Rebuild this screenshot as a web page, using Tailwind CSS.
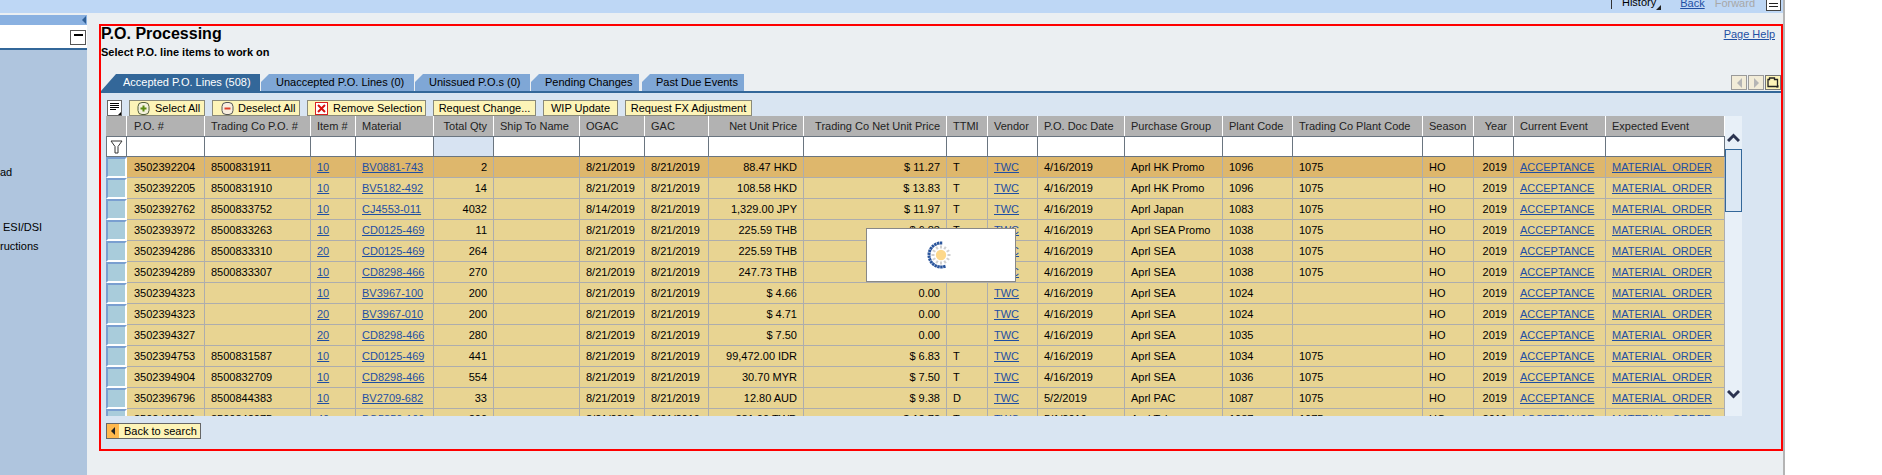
<!DOCTYPE html>
<html lang="en">
<head>
<meta charset="UTF-8">
<title>P.O. Processing</title>
<script src="https://cdn.jsdelivr.net/npm/@tailwindcss/browser@4"></script>
</head>
<body class="bg-white font-['Liberation_Sans',sans-serif] text-[11px] text-black overflow-hidden">
<div class="relative w-[1785px] h-[475px] overflow-hidden bg-[#ebeff2] border-r-2 border-[#b4b4b4] flex flex-col">

  <!-- top bar -->
  <div class="h-[13px] shrink-0 bg-[#bed7f5] flex justify-end items-start overflow-hidden pr-[2px] leading-[13px]">
    <div class="w-px h-[9px] bg-[#333] mr-[10px]"></div>
    <span class="-mt-[4px]">History</span>
    <div class="w-0 h-0 mt-[5px] mr-[19px] border-l-[5px] border-l-transparent border-b-[5px] border-b-[#222]"></div>
    <a class="-mt-[3px] mr-[10px] underline text-[#1f4fa3]">Back</a>
    <span class="-mt-[3px] mr-[11px] text-[#a8a8a8]">Forward</span>
    <div class="relative w-[15px] h-[12px] -mt-px border border-[#444] bg-white flex flex-col gap-[2px] pt-[3px] px-[2px]">
      <div class="h-px bg-[#222]"></div><div class="h-px bg-[#222]"></div>
    </div>
  </div>

  <div class="flex flex-1 min-h-0">
    <!-- left nav -->
    <aside class="w-[87px] shrink-0 pt-[2px] flex flex-col">
      <div class="h-[10px] bg-[#8ab1e1] flex justify-end items-center pr-[1px]">
        <div class="w-0 h-0 border-y-[4px] border-y-transparent border-r-[4px] border-r-[#2f5f95]"></div>
      </div>
      <div class="h-[23px] bg-white flex justify-end items-start pt-[5px] pr-[1px]">
        <div class="w-[16px] h-[15px] border border-[#555] flex justify-center pt-[3px]"><div class="w-[9px] h-[2px] bg-black"></div></div>
      </div>
      <div class="h-[2px] bg-[#336799]"></div>
      <div class="flex-1 bg-[#afc5de] leading-[13px]">
        <div class="mt-[116px]">ad</div>
        <div class="mt-[42px] pl-[3px]">ESI/DSI</div>
        <div class="mt-[6px]">ructions</div>
      </div>
    </aside>

    <!-- main -->
    <main class="flex-1 min-w-0 pt-[11px] pl-[12px]">
      <div class="w-[1684px] h-[427px] border-2 border-[#ff0000] flex flex-col">
        <div class="h-[48px] shrink-0 flex justify-between">
          <div>
            <h1 class="text-[16px] font-bold leading-[18px] mt-[-1px]">P.O. Processing</h1>
            <p class="font-bold leading-[13px] mt-[3px]">Select P.O. line items to work on</p>
          </div>
          <a class="underline text-[#1f4fa3] mr-[6px] mt-[2px] leading-[13px]">Page Help</a>
        </div>

        <!-- tabs -->
        <div class="h-[19px] shrink-0 flex border-b-2 border-[#336799]">
          <div class="w-[159px] h-[17px] bg-[#336799] text-white pl-[22px] leading-[16px] [clip-path:polygon(15px_0,100%_0,100%_100%,0_100%)]">Accepted P.O. Lines (508)</div>
          <div class="w-[153px] h-[17px] ml-px bg-[#7fa7d6] pl-[15px] leading-[16px] [clip-path:polygon(8px_0,100%_0,100%_100%,0_100%,0_8px)]">Unaccepted P.O. Lines (0)</div>
          <div class="w-[115px] h-[17px] ml-[1px] bg-[#7fa7d6] pl-[14px] leading-[16px] [clip-path:polygon(8px_0,100%_0,100%_100%,0_100%,0_8px)]">Unissued P.O.s (0)</div>
          <div class="w-[108px] h-[17px] ml-[1px] bg-[#7fa7d6] pl-[14px] leading-[16px] [clip-path:polygon(8px_0,100%_0,100%_100%,0_100%,0_8px)]">Pending Changes</div>
          <div class="w-[102px] h-[17px] ml-[3px] bg-[#7fa7d6] pl-[14px] leading-[16px] [clip-path:polygon(8px_0,100%_0,100%_100%,0_100%,0_8px)]">Past Due Events</div>
          <div class="ml-auto flex gap-px pt-px">
            <div class="w-[16px] h-[15px] bg-[#f2ecd8] border border-[#9a9a9a] flex items-center justify-center"><div class="w-0 h-0 border-y-[5px] border-y-transparent border-r-[5px] border-r-[#b5b5b5]"></div></div>
            <div class="w-[16px] h-[15px] bg-[#f2ecd8] border border-[#9a9a9a] flex items-center justify-center"><div class="w-0 h-0 border-y-[5px] border-y-transparent border-l-[5px] border-l-[#b5b5b5]"></div></div>
            <div class="w-[16px] h-[15px] bg-[#fdf4b8] border border-[#777] flex items-center justify-center">
              <svg width="12" height="11" viewBox="0 0 12 11" fill="none" stroke="#222"><path d="M1 2.5h1.5V1h5v1.500h3v7h-9.500z" stroke-width="1.300"/><path d="M9 10.500l2.500-2.500v2.500z" fill="#222" stroke="none"/></svg>
            </div>
          </div>
        </div>

        <!-- content -->
        <div class="flex-1 min-h-0 bg-[#d9e5f2] pl-[5px] pt-[7px]">
          <!-- toolbar -->
          <div class="h-[16px] flex gap-[7px] pl-px">
            <div class="relative w-[15px] h-[16px] bg-white border border-[#666] flex flex-col gap-px pt-[2px] px-[2px]">
              <div class="h-px w-[9px] bg-black"></div><div class="h-px w-[9px] bg-black"></div><div class="h-px w-[9px] bg-black"></div><div class="h-px w-[6px] bg-black"></div>
              <div class="absolute right-0 bottom-0 w-0 h-0 border-l-[3px] border-l-transparent border-b-[3px] border-b-black"></div>
            </div>
            <button class="w-[76px] h-[16px] bg-[#fdf4b8] border border-[#8a8a7a] flex items-center pl-[7px] leading-[14px]">
              <svg class="mr-[5px]" width="13" height="13" viewBox="0 0 13 13"><rect x="1" y="0.500" width="11" height="12" rx="4" fill="#f4f1dc" stroke="#55603a"/><path d="M6.500 3.500v6M3.500 6.500h6" stroke="#5c8a12" stroke-width="2"/></svg>Select All</button>
            <button class="w-[88px] h-[16px] bg-[#fdf4b8] border border-[#8a8a7a] flex items-center pl-[8px] leading-[14px]">
              <svg class="mr-[4px]" width="13" height="13" viewBox="0 0 13 13"><rect x="1" y="0.500" width="11" height="12" rx="4" fill="#f8eee0" stroke="#555"/><path d="M3.500 6.500h6" stroke="#e0402a" stroke-width="2"/></svg>Deselect All</button>
            <button class="w-[119px] h-[16px] bg-[#fdf4b8] border border-[#8a8a7a] flex items-center pl-[7px] leading-[14px]">
              <svg class="mr-[5px]" width="13" height="13" viewBox="0 0 13 13"><rect x="0.500" y="0.500" width="12" height="12" fill="#fff" stroke="#d82020"/><path d="M3 3l7 7M10 3l-7 7" stroke="#d81010" stroke-width="2"/></svg>Remove Selection</button>
            <button class="w-[103px] h-[16px] bg-[#fdf4b8] border border-[#8a8a7a] leading-[14px]">Request Change...</button>
            <button class="w-[75px] h-[16px] bg-[#fdf4b8] border border-[#8a8a7a] leading-[14px]">WIP Update</button>
            <button class="w-[127px] h-[16px] bg-[#fdf4b8] border border-[#8a8a7a] leading-[14px]">Request FX Adjustment</button>
          </div>

          <div class="flex h-[300px] items-stretch">
            <div class="w-[1619px] h-[300px] overflow-hidden">
              <table class="w-[1619px] table-fixed border-separate border-spacing-0">
                <colgroup>
                  <col class="w-[21px]"><col class="w-[78px]"><col class="w-[106px]"><col class="w-[45px]"><col class="w-[78px]"><col class="w-[60px]"><col class="w-[86px]"><col class="w-[65px]"><col class="w-[64px]"><col class="w-[95px]"><col class="w-[143px]"><col class="w-[41px]"><col class="w-[50px]"><col class="w-[87px]"><col class="w-[98px]"><col class="w-[70px]"><col class="w-[130px]"><col class="w-[51px]"><col class="w-[40px]"><col class="w-[92px]"><col class="w-[119px]">
                </colgroup>
                <thead>
                  <tr class="h-[20px] bg-[#b2b2b2] text-[#222] font-normal">
                    <th class="border-r border-white"></th>
                    <th class="font-normal text-left pl-[7px] pr-[5px] border-r border-white">P.O. #</th>
                    <th class="font-normal text-left px-[6px] border-r border-white">Trading Co P.O. #</th>
                    <th class="font-normal text-left px-[6px] border-r border-white">Item #</th>
                    <th class="font-normal text-left px-[6px] border-r border-white">Material</th>
                    <th class="font-normal text-right px-[6px] border-r border-white">Total Qty</th>
                    <th class="font-normal text-left px-[6px] border-r border-white">Ship To Name</th>
                    <th class="font-normal text-left px-[6px] border-r border-white">OGAC</th>
                    <th class="font-normal text-left px-[6px] border-r border-white">GAC</th>
                    <th class="font-normal text-right px-[6px] border-r border-white">Net Unit Price</th>
                    <th class="font-normal text-right px-[6px] border-r border-white">Trading Co Net Unit Price</th>
                    <th class="font-normal text-left px-[6px] border-r border-white">TTMI</th>
                    <th class="font-normal text-left px-[6px] border-r border-white">Vendor</th>
                    <th class="font-normal text-left px-[6px] border-r border-white">P.O. Doc Date</th>
                    <th class="font-normal text-left px-[6px] border-r border-white">Purchase Group</th>
                    <th class="font-normal text-left px-[6px] border-r border-white">Plant Code</th>
                    <th class="font-normal text-left px-[6px] border-r border-white">Trading Co Plant Code</th>
                    <th class="font-normal text-left px-[6px] border-r border-white">Season</th>
                    <th class="font-normal text-right px-[6px] border-r border-white">Year</th>
                    <th class="font-normal text-left px-[6px] border-r border-white">Current Event</th>
                    <th class="font-normal text-left px-[6px] border-r border-white">Expected Event</th>
                  </tr>
                  <tr class="h-[21px] bg-white" id="filters">
                    <td class="border-y border-[#6a7580] border-x p-0 text-center">
                      <svg class="inline-block" width="13" height="14" viewBox="0 0 13 14" fill="#fff" stroke="#333"><path d="M1 1h11L8 6.500v6.500H5V6.500z"/></svg>
                    </td>
                    <td class="border-y border-r border-[#6a7580]"></td><td class="border-y border-r border-[#6a7580]"></td><td class="border-y border-r border-[#6a7580]"></td><td class="border-y border-r border-[#6a7580]"></td>
                    <td class="border-y border-r border-[#6a7580] bg-[#d7e3f2]"></td>
                    <td class="border-y border-r border-[#6a7580]"></td><td class="border-y border-r border-[#6a7580]"></td><td class="border-y border-r border-[#6a7580]"></td><td class="border-y border-r border-[#6a7580]"></td><td class="border-y border-r border-[#6a7580]"></td><td class="border-y border-r border-[#6a7580]"></td><td class="border-y border-r border-[#6a7580]"></td><td class="border-y border-r border-[#6a7580]"></td><td class="border-y border-r border-[#6a7580]"></td><td class="border-y border-r border-[#6a7580]"></td><td class="border-y border-r border-[#6a7580]"></td><td class="border-y border-r border-[#6a7580]"></td><td class="border-y border-r border-[#6a7580]"></td><td class="border-y border-r border-[#6a7580]"></td><td class="border-y border-r border-[#6a7580]"></td>
                  </tr>
                </thead>
                <tbody id="rows"></tbody>
              </table>
            </div>
            <!-- scrollbar -->
            <div class="w-[17px] bg-[#e8f0f8] flex flex-col items-center">
              <div class="h-[33px] pt-[17px]"><svg width="13" height="9" viewBox="0 0 13 9" fill="none" stroke="#2b3350" stroke-width="3"><path d="M1 8l5.500-5.500L12 8"/></svg></div>
              <div class="w-[17px] h-[63px] bg-[#dce8f4] border border-[#336799]"></div>
              <div class="mt-auto mb-[17px]"><svg class="block" width="13" height="9" viewBox="0 0 13 9" fill="none" stroke="#2b3350" stroke-width="3"><path d="M1 1l5.500 5.500L12 1"/></svg></div>
            </div>
          </div>

          <button class="mt-[7px] w-[95px] h-[16px] flex items-center bg-[#fdf4b8] border border-[#666] leading-[14px]">
            <span class="w-[12px] h-[14px] bg-[#ffb84d] flex items-center justify-center mr-[5px]"><span class="w-0 h-0 border-y-[4px] border-y-transparent border-r-[4px] border-r-[#222]"></span></span>Back to search</button>
        </div>
      </div>
    </main>
  </div>

  <!-- loading popup -->
  <div class="absolute left-[866px] top-[228px] w-[150px] h-[54px] bg-white border border-[#888] flex items-center justify-center">
    <svg width="34" height="34" viewBox="-17 -17 34 34">
      <circle r="5.200" fill="#fdd88a"/>
      <g stroke="#cfcfcf" stroke-width="2" id="ticks"></g>
      <g stroke="#2a559c" stroke-width="2.500" id="arc"></g>
    </svg>
  </div>
</div>

<script>
  // line items as they come back from the search
  const lines = [
    ['3502392204','8500831911','10','BV0881-743','2','8/21/2019','8/21/2019','88.47 HKD','$ 11.27','T','4/16/2019','Aprl HK Promo','1096','1075'],
    ['3502392205','8500831910','10','BV5182-492','14','8/21/2019','8/21/2019','108.58 HKD','$ 13.83','T','4/16/2019','Aprl HK Promo','1096','1075'],
    ['3502392762','8500833752','10','CJ4553-011','4032','8/14/2019','8/21/2019','1,329.00 JPY','$ 11.97','T','4/16/2019','Aprl Japan','1083','1075'],
    ['3502393972','8500833263','10','CD0125-469','11','8/21/2019','8/21/2019','225.59 THB','$ 6.83','T','4/16/2019','Aprl SEA Promo','1038','1075'],
    ['3502394286','8500833310','20','CD0125-469','264','8/21/2019','8/21/2019','225.59 THB','$ 6.83','T','4/16/2019','Aprl SEA','1038','1075'],
    ['3502394289','8500833307','10','CD8298-466','270','8/21/2019','8/21/2019','247.73 THB','$ 7.50','T','4/16/2019','Aprl SEA','1038','1075'],
    ['3502394323','','10','BV3967-100','200','8/21/2019','8/21/2019','$ 4.66','0.00','','4/16/2019','Aprl SEA','1024',''],
    ['3502394323','','20','BV3967-010','200','8/21/2019','8/21/2019','$ 4.71','0.00','','4/16/2019','Aprl SEA','1024',''],
    ['3502394327','','20','CD8298-466','280','8/21/2019','8/21/2019','$ 7.50','0.00','','4/16/2019','Aprl SEA','1035',''],
    ['3502394753','8500831587','10','CD0125-469','441','8/21/2019','8/21/2019','99,472.00 IDR','$ 6.83','T','4/16/2019','Aprl SEA','1034','1075'],
    ['3502394904','8500832709','10','CD8298-466','554','8/21/2019','8/21/2019','30.70 MYR','$ 7.50','T','4/16/2019','Aprl SEA','1036','1075'],
    ['3502396796','8500844383','10','BV2709-682','33','8/21/2019','8/21/2019','12.80 AUD','$ 9.38','D','5/2/2019','Aprl PAC','1087','1075'],
    ['3502402886','8500842075','40','BQ5850-100','200','8/21/2019','8/21/2019','381.00 TWD','$ 12.73','T','5/1/2019','Aprl Taiwan','1087','1075'],
  ];

  const cell = 'px-[6px] border-r border-b border-[#adadad] whitespace-nowrap overflow-hidden';
  const link = 'underline text-[#1f4fa3]';

  document.getElementById('rows').innerHTML = lines.map((l, i) => `
    <tr class="h-[21px] ${i === 0 ? 'bg-[#deb76c]' : 'bg-[#e8d492]'}">
      <td class="bg-[#a9ccdb] border-2 border-t-[#7a9fd0] border-l-[#7a9fd0] border-r-white border-b-white"></td>
      <td class="${cell} pl-[7px]">${l[0]}</td>
      <td class="${cell}">${l[1]}</td>
      <td class="${cell}"><a class="${link}">${l[2]}</a></td>
      <td class="${cell}"><a class="${link}">${l[3]}</a></td>
      <td class="${cell} text-right">${l[4]}</td>
      <td class="${cell}"></td>
      <td class="${cell}">${l[5]}</td>
      <td class="${cell}">${l[6]}</td>
      <td class="${cell} text-right">${l[7]}</td>
      <td class="${cell} text-right">${l[8]}</td>
      <td class="${cell}">${l[9]}</td>
      <td class="${cell}"><a class="${link}">TWC</a></td>
      <td class="${cell}">${l[10]}</td>
      <td class="${cell}">${l[11]}</td>
      <td class="${cell}">${l[12]}</td>
      <td class="${cell}">${l[13]}</td>
      <td class="${cell}">HO</td>
      <td class="${cell} text-right">2019</td>
      <td class="${cell}"><a class="${link}">ACCEPTANCE</a></td>
      <td class="${cell}"><a class="${link}">MATERIAL_ORDER</a></td>
    </tr>`).join('');

  // spinner ticks
  const tick = (deg, r1, r2) => `<line y1="${-r1}" y2="${-r2}" transform="rotate(${deg})"/>`;
  let grey = '', blue = '';
  for (let a = 0; a < 360; a += 30) grey += tick(a, 6.5, 9.5);
  for (let a = 0; a <= 200; a += 14) blue += tick(-a, 10.5, 13.5);
  document.getElementById('ticks').innerHTML = grey;
  document.getElementById('arc').innerHTML = blue;
</script>
</body>
</html>
